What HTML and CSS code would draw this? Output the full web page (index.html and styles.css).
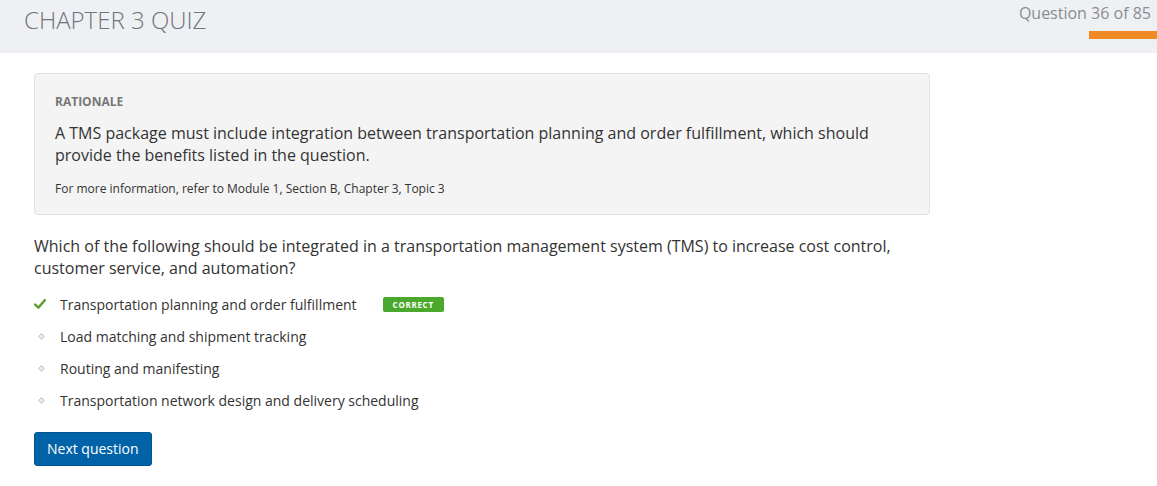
FILE: index.html
```html
<!DOCTYPE html>
<html>
<head>
<meta charset="utf-8">
<link rel="stylesheet" href="styles.css">
</head>
<body>
<header class="topbar">
  <h1 class="title">CHAPTER 3 QUIZ</h1>
  <div class="progress">
    <div class="progress-text">Question 36 of 85</div>
    <div class="progress-bar"></div>
  </div>
</header>
<main class="content">
  <section class="rationale">
    <div class="rationale-label">RATIONALE</div>
    <p class="rationale-text">A TMS package must include integration between transportation planning and order fulfillment, which should provide the benefits listed in the question.</p>
    <p class="rationale-ref">For more information, refer to Module 1, Section B, Chapter 3, Topic 3</p>
  </section>
  <p class="question">Which of the following should be integrated in a transportation management system (TMS) to increase cost control, customer service, and automation?</p>
  <ul class="options">
    <li class="option">
      <span class="icon"><svg width="12" height="10" viewBox="0 0 12 10"><path d="M1.2 5.6 L4.4 8.6 L10.8 1.2" fill="none" stroke="#5c9e2e" stroke-width="2.4" stroke-linecap="round" stroke-linejoin="round"/></svg></span>
      <span class="option-text">Transportation planning and order fulfillment</span>
      <span class="badge">CORRECT</span>
    </li>
    <li class="option">
      <span class="icon"><svg width="7" height="7" viewBox="0 0 7 7"><path d="M3.5 0.5 L6.5 3.5 L3.5 6.5 L0.5 3.5 Z" fill="#e8e8e8" stroke="#c2c2c2" stroke-width="1"/></svg></span>
      <span class="option-text">Load matching and shipment tracking</span>
    </li>
    <li class="option">
      <span class="icon"><svg width="7" height="7" viewBox="0 0 7 7"><path d="M3.5 0.5 L6.5 3.5 L3.5 6.5 L0.5 3.5 Z" fill="#e8e8e8" stroke="#c2c2c2" stroke-width="1"/></svg></span>
      <span class="option-text">Routing and manifesting</span>
    </li>
    <li class="option">
      <span class="icon"><svg width="7" height="7" viewBox="0 0 7 7"><path d="M3.5 0.5 L6.5 3.5 L3.5 6.5 L0.5 3.5 Z" fill="#e8e8e8" stroke="#c2c2c2" stroke-width="1"/></svg></span>
      <span class="option-text">Transportation network design and delivery scheduling</span>
    </li>
  </ul>
  <button class="next-btn">Next question</button>
</main>
</body>
</html>
```

FILE: styles.css
```css
* { box-sizing: border-box; }

body {
  margin: 0;
  background: #ffffff;
  font-family: "Open Sans", "Liberation Sans", sans-serif;
  color: #333333;
}

.topbar {
  height: 53px;
  background: #eff0f4;
  display: flex;
  justify-content: space-between;
  align-items: flex-start;
  padding-left: 24px;
}

.title {
  margin: 0;
  padding-top: 5px;
  font-size: 24px;
  font-weight: 300;
  line-height: 30px;
  color: #6f747a;
  letter-spacing: 0;
}

.progress {
  display: flex;
  flex-direction: column;
  align-items: flex-end;
}

.progress-text {
  font-size: 16px;
  line-height: 22px;
  color: #8a8d91;
  padding: 2px 6px 0 0;
}

.progress-bar {
  margin-top: 7px;
  width: 68px;
  height: 8px;
  background: #f08a24;
}

.content {
  width: 930px;
  padding: 20px 0 0 34px;
}

.rationale {
  background: #f4f4f4;
  border: 1px solid #e2e2e2;
  border-radius: 3px;
  padding: 19px 20px 17px;
}

.rationale-label {
  font-size: 12px;
  font-weight: 700;
  line-height: 17px;
  color: #777777;
}

.rationale-text {
  margin: 12px 0 0;
  font-size: 16px;
  line-height: 22px;
  color: #333333;
}

.rationale-ref {
  margin: 14px 0 0;
  font-size: 12px;
  line-height: 17px;
  color: #333333;
}

.question {
  margin: 20px 0 0;
  font-size: 16px;
  line-height: 22px;
  color: #333333;
}

.options {
  list-style: none;
  margin: 9px 0 0;
  padding: 0;
}

.option {
  height: 32px;
  display: flex;
  align-items: center;
  font-size: 14px;
}

.icon {
  width: 26px;
  display: flex;
  align-items: center;
  justify-content: flex-start;
}

.option:not(:first-child) .icon {
  padding-left: 4px;
}

.option-text {
  color: #333333;
}

.badge {
  margin-left: 26px;
  background: #4aa82d;
  color: #ffffff;
  font-size: 8px;
  font-weight: 700;
  letter-spacing: 0.7px;
  line-height: 15px;
  height: 15px;
  padding: 0 10px;
  border-radius: 2px;
}

.next-btn {
  margin-top: 16px;
  height: 34px;
  padding: 0 12px;
  background: #0063a8;
  border: 1px solid #00548f;
  border-radius: 3px;
  color: #ffffff;
  font-family: "Open Sans", "Liberation Sans", sans-serif;
  font-size: 14px;
  line-height: 20px;
}
```
